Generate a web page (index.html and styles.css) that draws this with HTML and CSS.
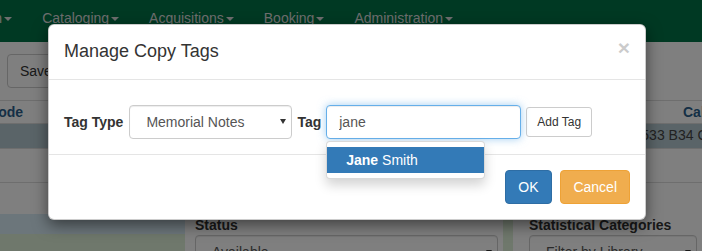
FILE: index.html
```html
<!DOCTYPE html>
<html lang="en">
<head>
  <meta charset="UTF-8">
  <title>Manage Copy Tags</title>
  <link rel="stylesheet" href="styles.css">
</head>
<body>
  <div class="page">
    <nav class="navbar">
      <ul class="nav">
        <li>Circulation<span class="caret"></span></li>
        <li>Cataloging<span class="caret"></span></li>
        <li>Acquisitions<span class="caret"></span></li>
        <li>Booking<span class="caret"></span></li>
        <li>Administration<span class="caret"></span></li>
      </ul>
    </nav>
    <div class="toolbar">
      <button class="btn btn-default" type="button">Save &amp; Exit</button>
    </div>
    <div class="grid">
      <div class="grid-row grid-head">
        <div class="cell cell-barcode">Barcode</div>
        <div class="cell">Call Number</div>
      </div>
      <div class="grid-row grid-selected">
        <div class="cell"></div>
        <div class="cell">A533 B34 C.1</div>
      </div>
      <div class="grid-row grid-tall"></div>
      <div class="grid-row grid-last"></div>
    </div>
    <div class="edit-panel">
      <div class="side"><div class="side-top"></div></div>
      <div class="edit-col col-status">
        <div class="col-label">Status</div>
        <div class="fake-select">Available<span class="arrow"></span></div>
      </div>
      <div class="gutter"></div>
      <div class="edit-col col-stats">
        <div class="col-label">Statistical Categories</div>
        <div class="fake-select">Filter by Library<span class="arrow"></span></div>
      </div>
    </div>
  </div>

  <div class="backdrop"></div>

  <div class="modal">
    <div class="modal-header">
      <h4 class="modal-title">Manage Copy Tags</h4>
      <button class="close" type="button" aria-label="Close">&times;</button>
    </div>
    <div class="modal-body">
      <label class="field-label">Tag Type</label>
      <div class="fake-select tag-type">Memorial Notes<span class="arrow"></span></div>
      <label class="field-label">Tag</label>
      <div class="tag-field">
        <input class="form-control" type="text" value="jane">
        <ul class="dropdown-menu">
          <li class="active"><strong>Jane</strong> Smith</li>
        </ul>
      </div>
      <button class="btn btn-default btn-sm" type="button">Add Tag</button>
    </div>
    <div class="modal-footer">
      <button class="btn btn-primary" type="button">OK</button>
      <button class="btn btn-warning" type="button">Cancel</button>
    </div>
  </div>
</body>
</html>
```

FILE: styles.css
```css
:root {
  --font: 'Liberation Sans', Arial, sans-serif;
  --text: #333;
  --blue: #337ab7;
  --border: #ccc;
}
html, body {
  margin: 0;
  padding: 0;
}
body {
  width: 702px;
  height: 251px;
  overflow: hidden;
  position: relative;
  font-family: var(--font);
  font-size: 14px;
  line-height: 20px;
  color: var(--text);
  background: #fff;
}

/* page behind the dialog */
.navbar {
  height: 42px;
  background: #007347;
}
.nav {
  display: flex;
  margin: 0 0 0 -79px;
  padding: 0;
  list-style: none;
}
.nav li {
  padding: 8px 15px;
  color: #ddd;
  white-space: nowrap;
}
.caret {
  display: inline-block;
  width: 0;
  height: 0;
  margin-left: 2px;
  vertical-align: middle;
  border-top: 4px solid;
  border-left: 4px solid transparent;
  border-right: 4px solid transparent;
}
.toolbar {
  height: 46px;
  padding: 12px 7px 0 7px;
  border-bottom: 1px solid #ddd;
}
.btn {
  display: inline-block;
  font-family: var(--font);
  font-size: 14px;
  line-height: 20px;
  padding: 6px 12px;
  border: 1px solid transparent;
  border-radius: 4px;
  cursor: pointer;
  white-space: nowrap;
}
.btn-default {
  background: #fff;
  color: var(--text);
  border-color: var(--border);
}
.btn-sm {
  font-size: 12px;
  line-height: 18px;
  padding: 5px 10px;
  border-radius: 3px;
}
.btn-primary {
  background: var(--blue);
  border-color: #2e6da4;
  color: #fff;
}
.btn-warning {
  background: #f0ad4e;
  border-color: #eea236;
  color: #fff;
}
.grid-row {
  display: grid;
  grid-template-columns: 683px 1fr;
  border-bottom: 1px solid #ddd;
  white-space: nowrap;
}
.grid-head {
  height: 21px;
  padding-top: 1px;
  font-weight: 700;
  color: #2b5f8c;
}
.cell-barcode {
  margin-left: -33px;
}
.grid-selected {
  grid-template-columns: 632px 1fr;
  height: 24px;
  line-height: 22px;
  background: #b4c8d0;
  color: #444;
}
.grid-tall {
  height: 33px;
}
.grid-last {
  height: 31px;
  border-bottom: none;
}
.edit-panel {
  display: flex;
  height: 38px;
  background: #dff0d8;
}
.side {
  width: 185px;
}
.side-top {
  height: 20px;
  background: #d9edf7;
}
.edit-col {
  background: #fff;
  padding-right: 5px;
}
.col-status {
  width: 303px;
  padding-left: 10px;
}
.gutter {
  width: 10px;
}
.col-stats {
  flex: 1;
  padding-left: 16px;
}
.col-label {
  font-weight: 700;
  padding-top: 1px;
}
.fake-select {
  box-sizing: border-box;
  display: flex;
  align-items: center;
  height: 34px;
  padding: 0 5px 0 16px;
  border: 1px solid var(--border);
  border-radius: 4px;
  background: #fff;
  color: #555;
  box-shadow: inset 0 1px 1px rgba(0, 0, 0, 0.075);
  white-space: nowrap;
}
.arrow {
  margin-left: auto;
  width: 0;
  height: 0;
  border-top: 5px solid #333;
  border-left: 3px solid transparent;
  border-right: 3px solid transparent;
}

/* dialog */
.backdrop {
  position: absolute;
  inset: 0;
  background: rgba(0, 0, 0, 0.5);
}
.modal {
  position: absolute;
  left: 48px;
  top: 24px;
  width: 598px;
  box-sizing: border-box;
  background: #fff;
  border: 1px solid rgba(0, 0, 0, 0.2);
  border-radius: 6px;
  box-shadow: 0 5px 15px rgba(0, 0, 0, 0.5);
}
.modal-header {
  display: flex;
  justify-content: space-between;
  align-items: flex-start;
  padding: 14px 15px;
  border-bottom: 1px solid #e5e5e5;
}
.modal-title {
  margin: 0;
  font-size: 18px;
  font-weight: 400;
  line-height: 1.42857;
}
.close {
  margin-top: -2px;
  padding: 0;
  background: none;
  border: none;
  font-family: var(--font);
  font-size: 21px;
  font-weight: 700;
  line-height: 1;
  color: #000;
  opacity: 0.2;
  cursor: pointer;
}
.modal-body {
  display: flex;
  align-items: center;
  gap: 5px;
  padding: 25px 15px 15px 15px;
}
.field-label {
  font-weight: 700;
}
.tag-type {
  width: 163px;
  margin-left: 1px;
}
.tag-field {
  position: relative;
}
.form-control {
  box-sizing: border-box;
  display: block;
  width: 195px;
  height: 34px;
  padding: 6px 12px;
  font-family: var(--font);
  font-size: 14px;
  color: #555;
  background: #fff;
  border: 1px solid #66afe9;
  border-radius: 4px;
  outline: none;
  box-shadow: inset 0 1px 1px rgba(0, 0, 0, 0.075), 0 0 8px rgba(102, 175, 233, 0.6);
}
.dropdown-menu {
  position: absolute;
  top: 100%;
  left: 0;
  z-index: 2;
  min-width: 159px;
  box-sizing: border-box;
  margin: 2px 0 0 0;
  padding: 5px 0;
  list-style: none;
  background: #fff;
  border: 1px solid rgba(0, 0, 0, 0.15);
  border-radius: 4px;
  box-shadow: 0 6px 12px rgba(0, 0, 0, 0.175);
}
.dropdown-menu li {
  padding: 3px 20px 3px 19px;
  white-space: nowrap;
}
.dropdown-menu li.active {
  background: var(--blue);
  color: #fff;
}
.modal-footer {
  padding: 15px;
  text-align: right;
  border-top: 1px solid #e5e5e5;
}
.modal-footer .btn + .btn {
  margin-left: 5px;
}
```
